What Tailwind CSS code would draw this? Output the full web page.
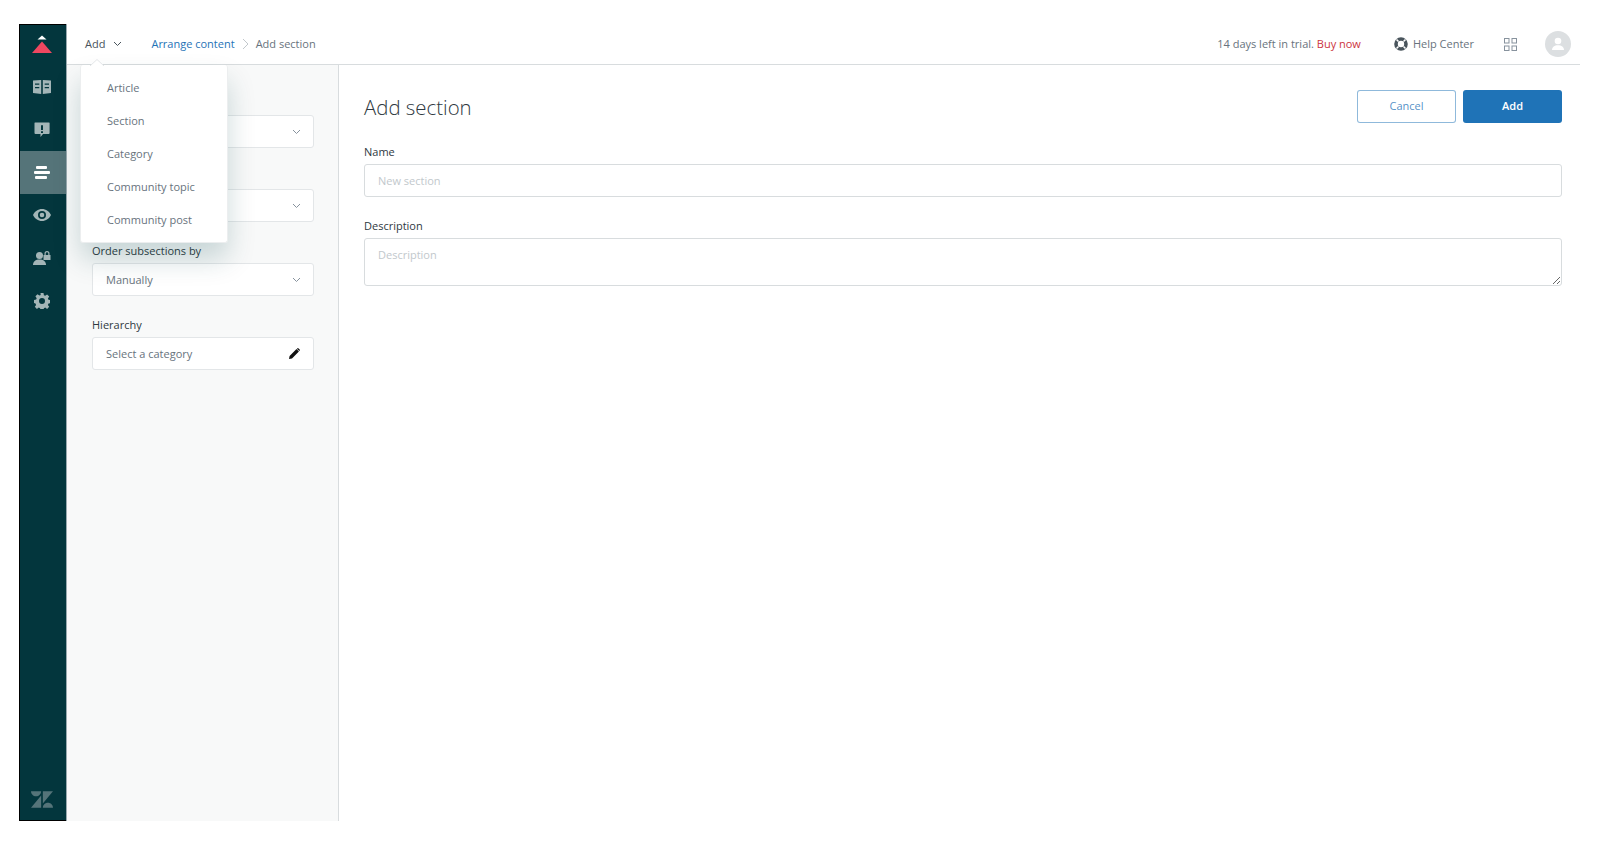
<!DOCTYPE html>
<html>
<head>
<meta charset="utf-8">
<script src="https://cdn.jsdelivr.net/npm/@tailwindcss/browser@4"></script>
<title>Add section</title>
</head>
<body class="bg-white font-['Open_Sans','Noto_Sans',sans-serif] text-[11px] text-[#68737d]">
<div class="w-[1600px] h-[854px] overflow-hidden pt-[24px] pl-[19px]">
  <div class="flex w-[1561px] h-[797px]">
    <!-- sidebar -->
    <nav class="w-[47px] shrink-0 h-full flex flex-col bg-[#03363d] border-l border-b border-t border-black border-r-0 relative">
      <div class="h-[40px] shrink-0 flex items-center justify-center pr-[2px]">
        <svg width="22" height="20" viewBox="0 0 22 20"><path d="M11 .5 15.500 4.500H6.500z" fill="#fff"/><path d="M11 6.500 21 18H1z" fill="#ef4760"/></svg>
      </div>
      <div class="h-[43px] shrink-0 flex items-center justify-center pr-[2px]">
        <svg width="18" height="16" viewBox="0 0 18 16"><path fill="#a3b5b7" fill-rule="evenodd" d="M0 1.500 8.200 1v14L0 14zM18 1.500 9.800 1v14l8.200-1zM2 4.500v1.200h4.300V4.500zM2 8v1.200h4.300V8zM11.700 4.500v1.200H16V4.500zM11.700 8v1.200H16V8z"/></svg>
      </div>
      <div class="h-[43px] shrink-0 flex items-center justify-center pr-[2px]">
        <svg width="16" height="16" viewBox="0 0 16 16"><path fill="#a3b5b7" fill-rule="evenodd" d="M1 .5h14a.6.6 0 0 1 .6.6V11a1 1 0 0 1-1 1H9l-2.500 3v-3H1.500a1 1 0 0 1-1-1V1.100A.6.6 0 0 1 1 .5zm6 2.800v4.700h2V3.300zM7 9.200V11h2V9.200z"/></svg>
      </div>
      <div class="h-[43px] shrink-0 flex flex-col gap-[2px] items-center justify-center bg-[#557479] pr-[2px]">
        <span class="block w-[11px] h-[3px] bg-white rounded-[1px] mr-[1px]"></span>
        <span class="block w-[16px] h-[3px] bg-white rounded-[1px]"></span>
        <span class="block w-[12px] h-[3px] bg-white rounded-[1px] mr-[2px]"></span>
      </div>
      <div class="h-[43px] shrink-0 flex items-center justify-center pr-[2px] pb-[2px]">
        <svg width="18" height="12" viewBox="0 0 18 12"><path fill="#a3b5b7" fill-rule="evenodd" d="M9 0c4 0 7.300 2.500 9 6-1.700 3.500-5 6-9 6S1.700 9.500 0 6c1.700-3.500 5-6 9-6zm0 2a4 4 0 1 0 0 8 4 4 0 0 0 0-8zm0 1.700a2.300 2.300 0 1 1 0 4.600 2.300 2.300 0 0 1 0-4.600z"/></svg>
      </div>
      <div class="h-[43px] shrink-0 flex items-center justify-center pr-[2px] pb-[2px]">
        <svg width="18" height="16" viewBox="0 0 18 16"><g fill="#a3b5b7"><circle cx="6.500" cy="5.500" r="3.500"/><path d="M0 15c0-3.500 2.500-5.500 6.500-5.500S13 11.500 13 15z"/><path fill-rule="evenodd" d="M11.500 5V3.500a2.500 2.500 0 0 1 5 0V5h1v5h-7V5zm1.200 0h2.600V3.500a1.300 1.300 0 0 0-2.600 0z"/></g></svg>
      </div>
      <div class="h-[43px] shrink-0 flex items-center justify-center pr-[2px] pb-[2px]">
        <svg width="16" height="16" viewBox="0 0 16 16"><path fill="#a3b5b7" fill-rule="evenodd" d="M6.500 0h3l.4 2.200 1.300.6 1.900-1.300 2.100 2.100-1.300 1.900.6 1.300 2.100.4v3l-2.100.4-.6 1.300 1.300 1.900-2.100 2.100-1.900-1.300-1.300.6-.4 2.100h-3l-.4-2.100-1.300-.6-1.900 1.300-2.100-2.100 1.300-1.900-.6-1.300L0 9.900v-3l2.100-.4.6-1.300-1.300-1.900 2.100-2.100 1.900 1.300 1.300-.6zM8 5a3 3 0 1 0 0 6 3 3 0 0 0 0-6z"/></svg>
      </div>
      <div class="mt-auto h-[44px] flex items-center justify-center pt-[2px] pr-[2px]">
        <svg width="22" height="17" viewBox="0 2.900 24 18.200"><path fill="#557479" d="M12.914 2.904V16.290L24 2.905H12.914zM0 2.906C0 5.966 2.483 8.450 5.543 8.450s5.542-2.484 5.543-5.544H0zm11.086 4.807L0 21.096h11.086V7.713zm7.370 7.840c-3.063 0-5.542 2.480-5.543 5.543H24c0-3.060-2.480-5.543-5.543-5.543z"/></svg>
      </div>
    </nav>

    <div class="flex-1 flex flex-col min-w-0 border-l border-[#55707a]/60 relative">
      <!-- top bar -->
      <header class="h-[41px] shrink-0 border-b border-[#d8dcde] flex items-center pl-[18px] pr-[9px] bg-white">
        <span class="text-[#49545c]">Add</span>
        <svg class="ml-[8px]" width="9" height="6" viewBox="0 0 9 6"><path d="M1 1l3.500 3.500L8 1" fill="none" stroke="#49545c"/></svg>
        <a class="ml-[29px] text-[#1f73b7]">Arrange content</a>
        <svg class="ml-[7px] mr-[6px]" width="8" height="12" viewBox="0 0 8 12"><path d="M1 1l5 5-5 5" fill="none" stroke="#c2c8cc"/></svg>
        <span>Add section</span>
        <span class="ml-auto">14 days left in trial. <span class="text-[#cc3340]">Buy now</span></span>
        <svg class="ml-[33px]" width="14" height="14" viewBox="0 0 14 14"><circle cx="7" cy="7" r="5" fill="none" stroke="#49545c" stroke-width="3.600"/><path d="M2.500 2.500l2 2M11.500 2.500l-2 2M2.500 11.500l2-2M11.500 11.500l-2-2" stroke="#fff" stroke-width="1.500"/></svg>
        <span class="ml-[5px]">Help Center</span>
        <svg class="ml-[30px]" width="13" height="13" viewBox="0 0 13 13"><g fill="none" stroke="#87929d"><rect x=".5" y=".5" width="4.500" height="4.500"/><rect x="8" y=".5" width="4.500" height="4.500"/><rect x=".5" y="8" width="4.500" height="4.500"/><rect x="8" y="8" width="4.500" height="4.500"/></g></svg>
        <div class="ml-[28px] w-[26px] h-[26px] rounded-full bg-[#dcdfe1] flex items-center justify-center">
          <svg width="14" height="14" viewBox="0 0 14 14"><circle cx="7" cy="4" r="3.300" fill="#fff"/><path d="M1 13c0-3 2.500-4.700 6-4.700s6 1.700 6 4.700z" fill="#fff"/></svg>
        </div>
      </header>

      <div class="flex-1 flex min-h-0">
        <!-- side panel -->
        <aside class="w-[272px] shrink-0 bg-[#f8f9f9] border-r border-[#d8dcde] pl-[25px] pr-[24px] pt-[30px] flex flex-col">
          <div class="h-[20px]">&nbsp;</div>
          <div class="h-[33px] bg-white border border-[#e3e6e8] rounded-[3px] flex items-center justify-between pl-[13px] pr-[12px]"><span>&nbsp;</span><svg width="9" height="6" viewBox="0 0 9 6"><path d="M1 1l3.500 3.500L8 1" fill="none" stroke="#87929d"/></svg></div>
          <div class="h-[21px] mt-[20px]">&nbsp;</div>
          <div class="h-[33px] bg-white border border-[#e3e6e8] rounded-[3px] flex items-center justify-between pl-[13px] pr-[12px]"><span>&nbsp;</span><svg width="9" height="6" viewBox="0 0 9 6"><path d="M1 1l3.500 3.500L8 1" fill="none" stroke="#87929d"/></svg></div>
          <div class="h-[21px] mt-[20px] font-medium text-[#2f3941] leading-[18px]">Order subsections by</div>
          <div class="h-[33px] bg-white border border-[#e3e6e8] rounded-[3px] flex items-center justify-between pl-[13px] pr-[12px]"><span class="pt-[2px]">Manually</span><svg width="9" height="6" viewBox="0 0 9 6"><path d="M1 1l3.500 3.500L8 1" fill="none" stroke="#87929d"/></svg></div>
          <div class="h-[21px] mt-[20px] font-medium text-[#2f3941] leading-[18px]">Hierarchy</div>
          <div class="h-[33px] bg-white border border-[#e3e6e8] rounded-[3px] flex items-center justify-between pl-[13px] pr-[13px]"><span class="pt-[2px]">Select a category</span><svg width="11" height="11" viewBox="0 0 11 11"><path d="M0 11l.6-3L7.500 1.100l2.400 2.400L3 10.400zM8.200.4a1 1 0 0 1 1.400 0l1 1a1 1 0 0 1 0 1.400l-.3.300-2.400-2.400z" fill="#111"/></svg></div>
        </aside>

        <!-- main -->
        <main class="flex-1 min-w-0 pl-[25px] pr-[18px] pt-[24px]">
          <div class="flex items-center justify-between h-[34px]">
            <h1 class="text-[20.4px] font-light text-[#2f3941] pt-[2px]">Add section</h1>
            <div class="flex gap-[7px]">
              <button class="w-[99px] h-[33px] rounded-[3px] border border-[#1f73b7]/50 text-[#1f73b7]/80 bg-white pt-[1px]">Cancel</button>
              <button class="w-[99px] h-[33px] rounded-[3px] bg-[#1f73b7] text-white font-semibold pt-[1px]">Add</button>
            </div>
          </div>
          <label class="block mt-[18px] h-[21px] leading-[21px] font-medium text-[#2f3941]">Name</label>
          <input class="block w-full h-[33px] mt-[2px] px-[13px] bg-white border border-[#d8dcde] rounded-[3px] outline-none placeholder:text-[#c2c8cc]" placeholder="New section">
          <label class="block mt-[18px] h-[21px] leading-[21px] font-medium text-[#2f3941]">Description</label>
          <textarea class="block w-full h-[48px] mt-[2px] px-[13px] py-[8px] bg-white border border-[#d8dcde] rounded-[3px] outline-none placeholder:text-[#c2c8cc]" placeholder="Description"></textarea>
        </main>
      </div>

      <!-- dropdown menu -->
      <div class="absolute left-[13px] top-[41px] w-[148px] h-[178px] bg-white rounded-[3px] shadow-[0_16px_28px_rgba(4,68,77,0.2)] border border-[#eceeef] border-t-0 py-[7px] text-[#68737d]">
        <svg class="absolute left-[9px] top-[-6px]" width="14" height="7" viewBox="0 0 14 7"><path d="M0 7l7-6.500L14 7" fill="#fff" stroke="#e3e6e8"/></svg>
        <div class="h-[33px] flex items-center pl-[26px]">Article</div>
        <div class="h-[33px] flex items-center pl-[26px]">Section</div>
        <div class="h-[33px] flex items-center pl-[26px]">Category</div>
        <div class="h-[33px] flex items-center pl-[26px]">Community topic</div>
        <div class="h-[33px] flex items-center pl-[26px]">Community post</div>
      </div>
    </div>
  </div>
</div>
</body>
</html>
